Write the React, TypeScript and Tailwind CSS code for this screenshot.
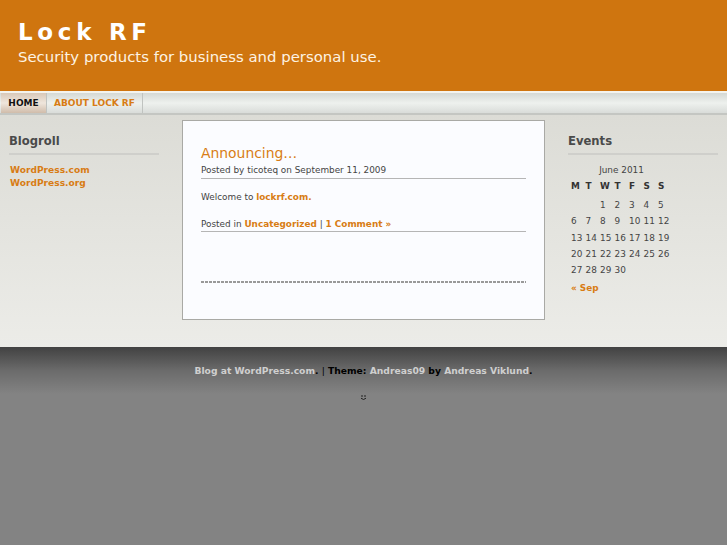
const font = { fontFamily: '"DejaVu Sans", Verdana, sans-serif' };

const days = [
  ["", "", "1", "2", "3", "4", "5"],
  ["6", "7", "8", "9", "10", "11", "12"],
  ["13", "14", "15", "16", "17", "18", "19"],
  ["20", "21", "22", "23", "24", "25", "26"],
  ["27", "28", "29", "30", "", "", ""],
];

const Calendar = () => (
  <div className="mt-[7px] pl-[3px] text-[8.9px] text-[#444]">
    <div className="h-[16px] w-[101px] text-center leading-[16px]">June 2011</div>
    <div className="grid h-[16px] grid-cols-[repeat(7,14.5px)] font-bold leading-[16px] text-[#333]">
      {["M", "T", "W", "T", "F", "S", "S"].map((d, i) => (
        <div key={i}>{d}</div>
      ))}
    </div>
    <div className="mt-[3px]">
      {days.map((row, i) => (
        <div key={i} className="grid h-[16.3px] grid-cols-[repeat(7,14.5px)] leading-[16.3px]">
          {row.map((d, j) => (
            <div key={j}>{d}</div>
          ))}
        </div>
      ))}
    </div>
    <div className="mt-[2px] font-bold leading-[16px] text-[#d87c14]">« Sep</div>
  </div>
);

const App = () => {
  return (
    <div style={font} className="h-[545px] w-[727px] overflow-hidden bg-[#838383]">
      <div className="h-[91px] bg-[#cf750f] pl-[18px] pt-[19px] text-white">
        <div className="text-[23px] font-bold leading-[27px] tracking-[4.7px]">Lock RF</div>
        <div className="text-[14.9px] leading-[22px] text-[#fdf3e3]">Security products for business and personal use.</div>
      </div>

      <div className="flex h-[24px] border-y-2 border-t-[#f4f4ee] border-b-[#c4c6c2] bg-gradient-to-b from-[#d5d9d5] via-[#eef1ee] to-[#d9dcd9] pl-[1px] text-[9px] font-bold leading-[20px]">
        <div className="w-[45px] bg-gradient-to-b from-[#d8c8b8] via-[#efe6dc] to-[#d0bcaa] text-center text-[#111]">HOME</div>
        <div className="w-[97px] border-x border-[#c0c3c0] text-center text-[#d87c14]">ABOUT LOCK RF</div>
      </div>

      <div className="flex h-[232px] bg-gradient-to-b from-[#dcdcd6] to-[#ecece8] pt-[5px]">
        <div className="ml-[9px] w-[150px]">
          <div className="border-b-2 border-[#cfcfcb] pb-[2px] pt-[12px] text-[11.6px] font-bold leading-[19px] text-[#4a4a4a]">Blogroll</div>
          <div className="ml-[1px] mt-[9px] text-[9.1px] font-bold leading-[13px] text-[#d87c14]">
            <div>WordPress.com</div>
            <div>WordPress.org</div>
          </div>
        </div>

        <div className="ml-[23px] h-[200px] w-[363px] border border-[#a9a9a5] bg-[#fbfcff] px-[18px] pt-[23px] text-[8.9px] text-[#444]">
          <div className="text-[13.9px] leading-[19px] text-[#d87c14]">Announcing…</div>
          <div className="border-b border-[#b5b5b5] leading-[15px]">Posted by ticoteq on September 11, 2009</div>
          <div className="mt-[11px] leading-[15px]">
            Welcome to <span className="font-bold text-[#d87c14]">lockrf.com.</span>
          </div>
          <div className="mt-[12px] border-b border-[#b5b5b5] leading-[14px]">
            Posted in <span className="font-bold text-[#d87c14]">Uncategorized</span> | <span className="font-bold text-[#d87c14]">1 Comment »</span>
          </div>
          <div className="mt-[49px] h-[2px] bg-[repeating-linear-gradient(90deg,#999_0px,#999_3px,transparent_3px,transparent_4px)]" />
        </div>

        <div className="ml-[23px] w-[150px]">
          <div className="border-b-2 border-[#cfcfcb] pb-[2px] pt-[12px] text-[11.6px] font-bold leading-[19px] text-[#4a4a4a]">Events</div>
          <Calendar />
        </div>
      </div>

      <div className="h-[47px] bg-gradient-to-b from-[#424242] via-[#6b6b6b] to-[#838383] pt-[16px] text-center text-[9.2px] font-bold leading-[16px] text-black">
        <span className="text-[#cfcfcf]">Blog at WordPress.com</span>. <span className="font-normal">|</span> Theme: <span className="text-[#cfcfcf]">Andreas09</span> by <span className="text-[#cfcfcf]">Andreas Viklund</span>.
      </div>
      <div className="flex justify-center">
        <svg width="7" height="7" viewBox="0 0 7 7" className="text-[#222]">
          <rect x="1.5" y="1" width="1" height="2" fill="currentColor" />
          <rect x="4.5" y="1" width="1" height="2" fill="currentColor" />
          <path d="M1 4.2 Q3.5 6.8 6 4.2" stroke="currentColor" strokeWidth="1" fill="none" />
        </svg>
      </div>
    </div>
  );
};

export default App;
